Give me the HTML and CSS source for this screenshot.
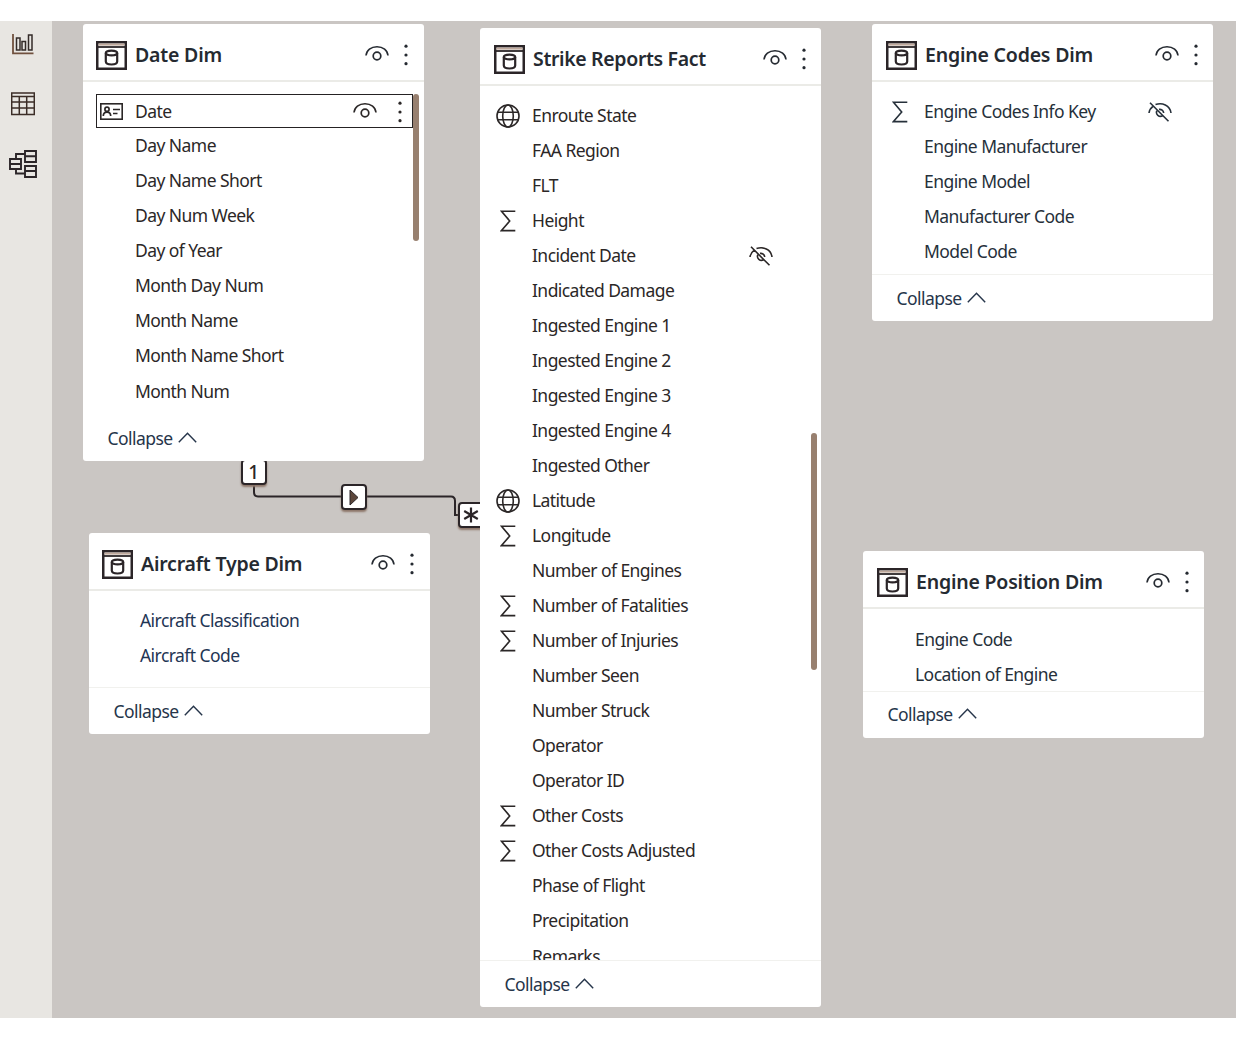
FILE: index.html
```html
<!DOCTYPE html>
<html lang="en">
<head>
<meta charset="utf-8">
<title>Model view</title>
<link rel="stylesheet" href="styles.css">
</head>
<body>
<svg class="defs" aria-hidden="true">
  <symbol id="table" viewBox="0 0 31 29"><rect x="1.25" y="1.25" width="28.5" height="26.5" fill="none" stroke="#2b2528" stroke-width="2.5"/><path d="M2 6H29" stroke="#2b2528" stroke-width="1.8"/><path d="M2.5 3.6H28.5" stroke="#bfa99c" stroke-width="2"/><path d="M9.8 12V20.500C9.800 22.800 12 23.500 15.500 23.500S21.200 22.800 21.200 20.500V12" fill="none" stroke="#2b2528" stroke-width="2.200"/><ellipse cx="15.500" cy="12" rx="5.700" ry="2.400" fill="none" stroke="#2b2528" stroke-width="2.200"/></symbol>
  <symbol id="eye" viewBox="0 0 24 20"><path d="M1 10.500C1.500 5 6 1.700 12 1.700S22.500 5 23 10.500" fill="none" stroke="currentColor" stroke-width="1.600"/><circle cx="12" cy="11" r="3.800" fill="none" stroke="currentColor" stroke-width="1.700"/></symbol>
  <symbol id="hidden" viewBox="0 0 24 20"><path d="M1 11C1.300 8.500 2.800 6 5.300 4.200M7.500 2.600C14 .400 22 3 23 11M11 7.400A4 4 0 0 1 15.700 11M14.500 13.800A4 4 0 0 1 8.800 8.800M2 .800L20.500 19.300" fill="none" stroke="currentColor" stroke-width="1.600"/></symbol>
  <symbol id="dots" viewBox="0 0 4 22"><circle cx="2" cy="2.200" r="1.600"/><circle cx="2" cy="11" r="1.600"/><circle cx="2" cy="19.700" r="1.600"/></symbol>
  <symbol id="sigma" viewBox="0 0 16 22"><path d="M15.300 1.300H1.500L9.700 11L1.500 20.600H15.300" fill="none" stroke="currentColor" stroke-width="1.600"/></symbol>
  <symbol id="globe" viewBox="0 0 24 24"><g fill="none" stroke="currentColor" stroke-width="1.600"><circle cx="12" cy="12" r="11"/><ellipse cx="12" cy="12" rx="5.300" ry="11"/><path d="M2 8.300H22M2 15.700H22"/></g></symbol>
  <symbol id="key" viewBox="0 0 23 17"><g fill="none" stroke="currentColor"><rect x=".800" y=".800" width="21.400" height="15.400" stroke-width="1.600"/><path d="M3.300 13C3.300 7.800 10.700 7.800 10.700 13M13 6.500H20M13 10.500H17.500" stroke-width="1.700"/><circle cx="7" cy="6.300" r="2.100" stroke-width="1.700"/></g></symbol>
  <symbol id="chevron" viewBox="0 0 19 11"><path d="M.800 10.200L9.500 1.200L18.200 10.200" fill="none" stroke="currentColor" stroke-width="1.400"/></symbol>
</svg>

<main class="app">
  <nav class="rail">
    <svg class="rail-report" viewBox="0 0 22 22"><path d="M1 1V20.300H21.500" fill="none" stroke="#70513f" stroke-width="1.800"/><path d="M4.500 5H8V17H4.500ZM10 8.500H13.500V17H10ZM16.500 2H20V17H16.500Z" fill="none" stroke="#332b28" stroke-width="1.500"/></svg>
    <svg class="rail-data" viewBox="0 0 24 24"><g fill="none" stroke="#3b2d27" stroke-width="1.500"><path d="M.7 1H23.300V22.500H.700ZM.700 4.500H23.300M.700 10H23.300M.700 16H23.300M8.300 4.500V22.500M15.700 4.500V22.500"/></g></svg>
    <svg class="rail-model" viewBox="0 0 28 28"><g fill="none" stroke="#2b2528" stroke-width="1.900"><path d="M16 1H27V12H16ZM16 6.200H27M16 16H27V27H16ZM16 21H27M1 9H12V19H1ZM1 14H12M7 9V4H16M7 19V23.500H16"/></g></svg>
  </nav>

  <section class="canvas">
    <svg class="link" viewBox="0 0 428 180"><path d="M202 63V71Q202 75.500 206 75.500H399Q403 75.500 403 80V94H407" fill="none" stroke="#2b2528" stroke-width="2"/></svg>
    <div class="badge badge-one">1</div>
    <div class="badge badge-dir"><svg viewBox="0 0 10 17"><path d="M1 1V16L9 8.500Z" fill="#5c463b" stroke="#2b2528"/></svg></div>
    <div class="badge badge-many"><svg viewBox="0 0 16 16"><path d="M8 .500V15.500M1.200 4L14.800 12M1.200 12L14.800 4" stroke="#2b2528" stroke-width="2.200"/></svg></div>

    <article class="card date">
      <header><svg class="table"><use href="#table"/></svg><h2>Date Dim</h2><svg class="eye"><use href="#eye"/></svg><svg class="dots"><use href="#dots"/></svg></header>
      <ul>
        <li class="selected"><span class="kind"><svg class="key"><use href="#key"/></svg></span>Date<svg class="eye"><use href="#eye"/></svg><svg class="dots"><use href="#dots"/></svg></li>
        <li>Day Name</li>
        <li>Day Name Short</li>
        <li>Day Num Week</li>
        <li>Day of Year</li>
        <li>Month Day Num</li>
        <li>Month Name</li>
        <li>Month Name Short</li>
        <li>Month Num</li>
      </ul>
      <i class="thumb"></i>
      <footer>Collapse<svg class="chevron"><use href="#chevron"/></svg></footer>
    </article>

    <article class="card strike">
      <header><svg class="table"><use href="#table"/></svg><h2>Strike Reports Fact</h2><svg class="eye"><use href="#eye"/></svg><svg class="dots"><use href="#dots"/></svg></header>
      <ul>
        <li><span class="kind"><svg class="globe"><use href="#globe"/></svg></span>Enroute State</li>
        <li>FAA Region</li>
        <li>FLT</li>
        <li><span class="kind"><svg class="sigma"><use href="#sigma"/></svg></span>Height</li>
        <li>Incident Date<svg class="hidden"><use href="#hidden"/></svg></li>
        <li>Indicated Damage</li>
        <li>Ingested Engine 1</li>
        <li>Ingested Engine 2</li>
        <li>Ingested Engine 3</li>
        <li>Ingested Engine 4</li>
        <li>Ingested Other</li>
        <li><span class="kind"><svg class="globe"><use href="#globe"/></svg></span>Latitude</li>
        <li><span class="kind"><svg class="sigma"><use href="#sigma"/></svg></span>Longitude</li>
        <li>Number of Engines</li>
        <li><span class="kind"><svg class="sigma"><use href="#sigma"/></svg></span>Number of Fatalities</li>
        <li><span class="kind"><svg class="sigma"><use href="#sigma"/></svg></span>Number of Injuries</li>
        <li>Number Seen</li>
        <li>Number Struck</li>
        <li>Operator</li>
        <li>Operator ID</li>
        <li><span class="kind"><svg class="sigma"><use href="#sigma"/></svg></span>Other Costs</li>
        <li><span class="kind"><svg class="sigma"><use href="#sigma"/></svg></span>Other Costs Adjusted</li>
        <li>Phase of Flight</li>
        <li>Precipitation</li>
        <li>Remarks</li>
      </ul>
      <i class="thumb"></i>
      <footer>Collapse<svg class="chevron"><use href="#chevron"/></svg></footer>
    </article>

    <article class="card codes">
      <header><svg class="table"><use href="#table"/></svg><h2>Engine Codes Dim</h2><svg class="eye"><use href="#eye"/></svg><svg class="dots"><use href="#dots"/></svg></header>
      <ul>
        <li><span class="kind"><svg class="sigma"><use href="#sigma"/></svg></span>Engine Codes Info Key<svg class="hidden"><use href="#hidden"/></svg></li>
        <li>Engine Manufacturer</li>
        <li>Engine Model</li>
        <li>Manufacturer Code</li>
        <li>Model Code</li>
      </ul>
      <footer>Collapse<svg class="chevron"><use href="#chevron"/></svg></footer>
    </article>

    <article class="card aircraft">
      <header><svg class="table"><use href="#table"/></svg><h2>Aircraft Type Dim</h2><svg class="eye"><use href="#eye"/></svg><svg class="dots"><use href="#dots"/></svg></header>
      <ul>
        <li>Aircraft Classification</li>
        <li>Aircraft Code</li>
      </ul>
      <footer>Collapse<svg class="chevron"><use href="#chevron"/></svg></footer>
    </article>

    <article class="card position">
      <header><svg class="table"><use href="#table"/></svg><h2>Engine Position Dim</h2><svg class="eye"><use href="#eye"/></svg><svg class="dots"><use href="#dots"/></svg></header>
      <ul>
        <li>Engine Code</li>
        <li>Location of Engine</li>
      </ul>
      <footer>Collapse<svg class="chevron"><use href="#chevron"/></svg></footer>
    </article>
  </section>
</main>
</body>
</html>
```
FILE: styles.css
```css
* { box-sizing: border-box; }
body {
  margin: 0;
  height: 1039px;
  padding: 21px 0;
  background: #fff;
  overflow: hidden;
  font: 17.5px/1 "Noto Sans", "Open Sans", sans-serif;
  letter-spacing: -0.56px;
  color: #2b2727;
}
svg { display: block; flex: none; }
.defs { position: absolute; width: 0; height: 0; }
.app { display: flex; height: 997px; }

.rail {
  width: 52px;
  background: #e8e6e2;
  display: flex;
  flex-direction: column;
  padding: 12px 0 0 9px;
}
.rail-report { width: 22px; height: 22px; margin-left: 3px; }
.rail-data { width: 24px; height: 24px; margin: 37px 0 0 2px; }
.rail-model { width: 28px; height: 28px; margin-top: 34px; }

.canvas { position: relative; flex: 1; background: #cac6c3; overflow: hidden; }

.card {
  position: absolute;
  width: 341px;
  background: #fff;
  border-radius: 3px;
  display: flex;
  flex-direction: column;
}
.date { left: 31px; top: 3px; height: 437px; }
.strike { left: 428px; top: 7px; height: 979px; }
.codes { left: 820px; top: 3px; height: 297px; color: #26303a; }
.aircraft { left: 37px; top: 512px; height: 201px; color: #1f3554; }
.position { left: 811px; top: 530px; height: 187px; color: #26303a; }

.card header {
  height: 58px;
  flex: none;
  display: flex;
  align-items: center;
  padding: 6px 16px 0 13px;
  border-bottom: 2px solid #ebebe7;
  color: #252a31;
}
.strike header, .codes header, .position header { padding-left: 14px; padding-right: 15px; }
.card h2 {
  flex: 1;
  margin: 0 0 0 8px;
  font-size: 19.5px;
  font-weight: 600;
  letter-spacing: -0.2px;
  white-space: nowrap;
}
.strike h2 { letter-spacing: -0.35px; }
.table { width: 31px; height: 29px; }
.eye { width: 24px; height: 20px; }
.dots { width: 4px; height: 22px; fill: currentColor; margin-left: 15px; }

.card ul {
  list-style: none;
  margin: 0;
  padding: 12px 11px 0 13px;
  flex: 1;
  min-height: 0;
  overflow: hidden;
}
.position ul { padding-top: 13px; }
.card li {
  height: 35.035px;
  padding-left: 39px;
  display: flex;
  align-items: center;
  white-space: nowrap;
}
.aircraft li { padding-left: 38px; }
.kind {
  width: 39px;
  margin-left: -39px;
  padding-right: 9px;
  display: flex;
  justify-content: center;
}
.card .selected {
  height: 34px;
  margin-bottom: 0.53px;
  padding: 1px 10px 0 38px;
  border: 1.5px solid #252223;
}
.selected .kind { padding-right: 8px; }
.selected .eye { margin-left: auto; }
.selected .dots { margin-left: 21px; }
.key { width: 23px; height: 17px; }
.globe { width: 24px; height: 24px; }
.sigma { width: 16px; height: 22px; }
.hidden { width: 24px; height: 20px; margin-left: auto; margin-right: 37px; }
.codes .hidden { margin-right: 30px; }

.card footer {
  height: 47px;
  flex: none;
  display: flex;
  align-items: center;
  gap: 5px;
  padding: 2px 0 0 24.5px;
  border-top: 1px solid #f1f1ee;
  color: #26354a;
}
.date footer { border-color: transparent; }
.position footer { padding-top: 0; }
.chevron { width: 19px; height: 11px; margin-top: -4px; }

.thumb { position: absolute; width: 6px; border-radius: 3px; background: #98806f; }
.date .thumb { left: 330px; top: 70px; height: 147px; }
.strike .thumb { left: 330.5px; top: 405px; height: 237px; }

.link { position: absolute; left: 0; top: 400px; width: 428px; height: 180px; }
.badge {
  position: absolute;
  width: 26px;
  height: 26px;
  display: flex;
  align-items: center;
  justify-content: center;
  background: #fff;
  border: 2px solid #2b2528;
  border-radius: 4px;
  box-shadow: 0 2px 2px #8d776a;
  font-size: 19px;
}
.badge-one { left: 189px; top: 438px; padding-right: 1px; font-weight: 500; }
.badge-dir { left: 289px; top: 463px; }
.badge-many { left: 406px; top: 481px; }
.badge-dir svg { width: 10px; height: 17px; }
.badge-many svg { width: 16px; height: 16px; }
```
